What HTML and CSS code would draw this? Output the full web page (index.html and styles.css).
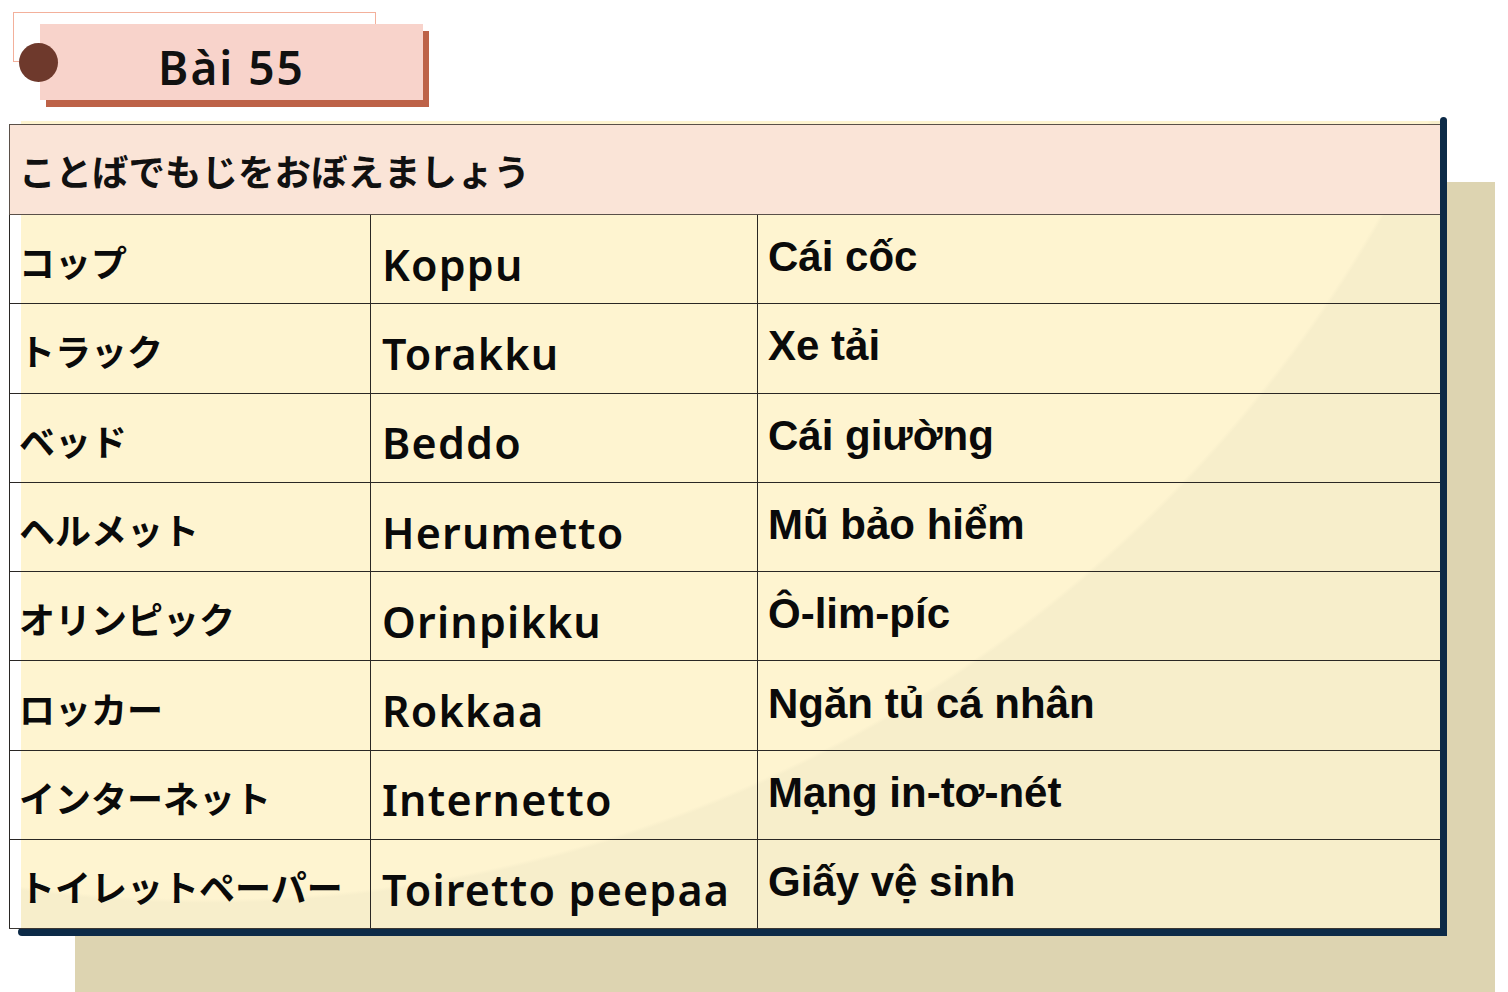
FILE: index.html
```html
<!DOCTYPE html>
<html lang="ja">
<head>
<meta charset="utf-8">
<title>Bài 55</title>
<link rel="stylesheet" href="styles.css">
</head>
<body>
<div class="page">
  <div class="title-area">
    <div class="title-outline"></div>
    <div class="title-card">
      <span class="title-dot"></span>
      <h1 class="title-text">Bài 55</h1>
    </div>
  </div>

  <div class="sheet">
    <div class="sheet-tan"></div>
    <div class="sheet-paper"></div>
    <div class="sheet-edge-right"></div>
    <div class="sheet-edge-bottom"></div>
    <table class="vocab">
      <colgroup>
        <col class="col-jp">
        <col class="col-ro">
        <col class="col-vi">
      </colgroup>
      <thead>
        <tr class="head-row"><th colspan="3" class="head-cell">ことばでもじをおぼえましょう</th></tr>
      </thead>
      <tbody>
        <tr><td class="jp">コップ</td><td class="ro">Koppu</td><td class="vi">Cái cốc</td></tr>
        <tr><td class="jp">トラック</td><td class="ro">Torakku</td><td class="vi">Xe tải</td></tr>
        <tr><td class="jp">ベッド</td><td class="ro">Beddo</td><td class="vi">Cái giường</td></tr>
        <tr><td class="jp">ヘルメット</td><td class="ro">Herumetto</td><td class="vi">Mũ bảo hiểm</td></tr>
        <tr><td class="jp">オリンピック</td><td class="ro">Orinpikku</td><td class="vi">Ô-lim-píc</td></tr>
        <tr><td class="jp">ロッカー</td><td class="ro">Rokkaa</td><td class="vi">Ngăn tủ cá nhân</td></tr>
        <tr><td class="jp">インターネット</td><td class="ro">Internetto</td><td class="vi">Mạng in-tơ-nét</td></tr>
        <tr><td class="jp">トイレットペーパー</td><td class="ro">Toiretto peepaa</td><td class="vi">Giấy vệ sinh</td></tr>
      </tbody>
    </table>
  </div>
</div>
</body>
</html>
```

FILE: styles.css
```css
html, body {
  margin: 0;
  padding: 0;
  background: #ffffff;
}

.page {
  width: 1508px;
  height: 992px;
  overflow: hidden;
  position: relative;
}

/* ---------- Title badge ---------- */
.title-area {
  position: relative;
  height: 124px;
}

.title-outline {
  position: absolute;
  left: 13px;
  top: 12px;
  width: 363px;
  height: 50px;
  border: 1px solid #f3b09b;
  box-sizing: border-box;
}

.title-card {
  position: absolute;
  left: 40px;
  top: 24px;
  width: 383px;
  height: 76px;
  background: #f8d3cb;
  box-shadow: 6px 7px 0 #bd6248;
  display: flex;
  align-items: center;
  justify-content: center;
}

.title-dot {
  position: absolute;
  left: -21px;
  top: 19px;
  width: 39px;
  height: 39px;
  border-radius: 50%;
  background: #6e392c;
}

.title-text {
  margin: 0;
  font-family: "Noto Sans", "Liberation Sans", sans-serif;
  font-weight: 600;
  font-size: 46px;
  letter-spacing: 2px;
  line-height: 1;
  color: #111111;
  transform: translate(0, 5px);
}

/* ---------- Sheet ---------- */
.sheet {
  position: relative;
  height: 868px;
}

.sheet-tan {
  position: absolute;
  left: 75px;
  top: 58px;
  width: 1420px;
  height: 820px;
  background: #ddd4b1;
}

.sheet-paper {
  position: absolute;
  left: 21px;
  top: -3px;
  width: 1419px;
  height: 807px;
  background: radial-gradient(circle 1353px at 185px -571px, #fef4d0 0, #fef4d0 99.7%, #f7eecb 100%);
}

.sheet-edge-right {
  position: absolute;
  left: 1440px;
  top: -7px;
  width: 7px;
  height: 819px;
  background: #0c2a47;
  border-radius: 4px 4px 0 0;
}

.sheet-edge-bottom {
  position: absolute;
  left: 18px;
  top: 804px;
  width: 1429px;
  height: 8px;
  background: #0c2a47;
  border-radius: 4px 0 0 4px;
}

.vocab {
  position: relative;
  margin-left: 9px;
  width: 1431px;
  border-collapse: collapse;
  table-layout: fixed;
}

.col-jp { width: 361px; }
.col-ro { width: 387px; }
.col-vi { width: auto; }

.head-row {
  height: 90px;
}

.head-cell {
  background: #fae4d7;
  border: 1.5px solid #5a5049;
  border-right: none;
  text-align: left;
  padding: 2px 0 0 9px;
  font-family: "Noto Sans CJK JP", "Noto Sans", sans-serif;
  font-weight: 700;
  font-size: 36.5px;
  color: #111111;
  vertical-align: middle;
}

.vocab tbody tr {
  height: 89.3px;
}

.vocab td {
  border: 1.5px solid #2a2724;
  vertical-align: middle;
  color: #0a0a0a;
  white-space: nowrap;
  overflow: hidden;
}

.vocab td:last-child {
  border-right: none;
}

.vocab tbody tr:last-child td {
  border-bottom: 1.5px solid #3a3632;
}

.jp {
  padding: 4px 0 0 9px;
  font-family: "Noto Sans CJK JP", "Noto Sans", sans-serif;
  font-weight: 700;
  font-size: 36px;
}

.ro {
  padding: 10px 0 0 11px;
  font-family: "Noto Sans", "Liberation Sans", sans-serif;
  font-weight: 600;
  font-size: 43px;
  letter-spacing: 1.2px;
}

.vi {
  padding: 0 0 4px 10px;
  font-family: "Liberation Sans", Arial, sans-serif;
  font-weight: 700;
  font-size: 42px;
}
```
